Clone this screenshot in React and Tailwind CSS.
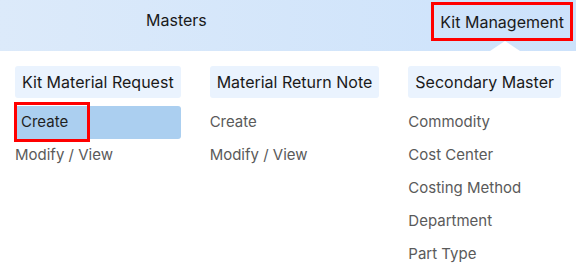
import React from 'react';

const columns = [
  { title: 'Kit Material Request', items: ['Create', 'Modify / View'], active: 'Create' },
  { title: 'Material Return Note', items: ['Create', 'Modify / View'] },
  {
    title: 'Secondary Master',
    items: ['Commodity', 'Cost Center', 'Costing Method', 'Department', 'Part Type'],
  },
];

export default function App() {
  return (
    <div className="w-[576px] h-[279px] bg-white overflow-hidden" style={{ fontFamily: 'Inter, "Noto Sans", sans-serif' }}>
      <div className="relative h-[51px] bg-gradient-to-r from-[#dceafa] to-[#cce2fb] flex items-start text-[16px] text-[#1a1a1a]">
        <div className="ml-[146px] mt-[8px]">Masters</div>
        <div className="ml-auto mr-[3px] mt-[2px] relative">
          <div className="border-[3px] border-[#ff0000] px-[6px] h-[39px] flex items-center">Kit Management</div>
          <div className="absolute left-[59px] top-[39px] w-0 h-0 border-l-[15px] border-r-[15px] border-b-[10px] border-l-transparent border-r-transparent border-b-white" />
        </div>
      </div>

      <div className="flex gap-[29px] pl-[15px] pt-[15px]">
        {columns.map((col) => (
          <div key={col.title} className="flex flex-col">
            <div className="h-[32px] px-[7px] flex items-center bg-[#eaf3fe] rounded-[3px] text-[16px] text-[#1a1a1a] whitespace-nowrap">
              {col.title}
            </div>
            <div className="mt-[8px] flex flex-col">
              {col.items.map((item) =>
                item === col.active ? (
                  <div key={item} className="relative h-[33px] bg-[#abcff0] rounded-[3px] flex items-center px-[6px] text-[15px] text-[#1f1f1f]">
                    {item}
                    <div className="absolute left-[-1px] top-[-4px] w-[76px] h-[40px] border-[3px] border-[#ff0000]" />
                  </div>
                ) : (
                  <div key={item} className="h-[33px] flex items-center text-[15px] text-[#5a5a5a] whitespace-nowrap">
                    {item}
                  </div>
                )
              )}
            </div>
          </div>
        ))}
      </div>
    </div>
  );
}
